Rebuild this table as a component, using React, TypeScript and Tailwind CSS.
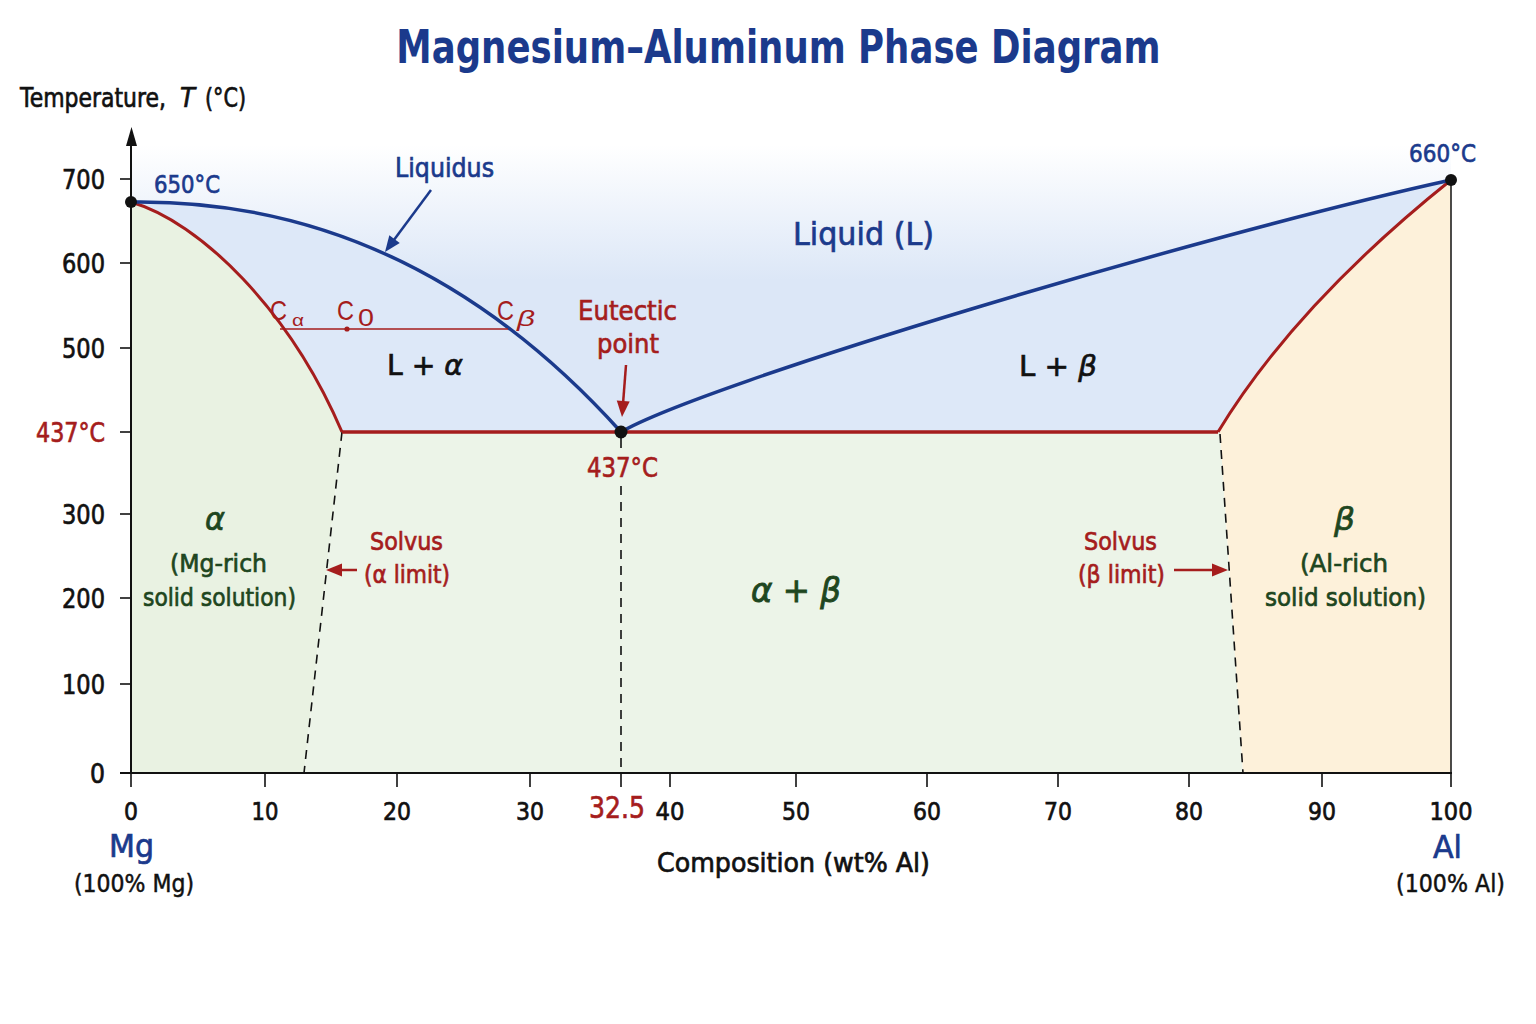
import type { ReactNode } from 'react';

const BLUE = '#1b3a8c';
const RED = '#a51d1d';
const GREEN = '#1e4620';
const INK = '#111111';
const FONT = '"DejaVu Sans", "Noto Sans", sans-serif';
const THIN = '"Liberation Sans", "DejaVu Sans", sans-serif';

// text squeezed to the measured width of the reference label
const Label = ({
    x, y, w, size, fill = INK, anchor = 'middle', italic = false, family = FONT, heavy = 0.7, children,
}: {
    x: number; y: number; w?: number; size: number; fill?: string;
    anchor?: 'start' | 'middle' | 'end'; italic?: boolean; family?: string; heavy?: number; children: ReactNode;
}) => (
    <text
        x={x}
        y={y}
        fontSize={size}
        fill={fill}
        stroke={heavy ? fill : undefined}
        strokeWidth={heavy || undefined}
        textAnchor={anchor}
        fontFamily={family}
        fontStyle={italic ? 'italic' : 'normal'}
        textLength={w}
        lengthAdjust={w ? 'spacingAndGlyphs' : undefined}
    >
        {children}
    </text>
);

const Arrow = ({ x1, y1, x2, y2, color }: { x1: number; y1: number; x2: number; y2: number; color: string }) => {
    const len = Math.hypot(x2 - x1, y2 - y1);
    const ux = (x2 - x1) / len;
    const uy = (y2 - y1) / len;
    const head = 16;
    const half = 6.5;
    const bx = x2 - ux * head;
    const by = y2 - uy * head;
    const pts = `${x2},${y2} ${bx - uy * half},${by + ux * half} ${bx + uy * half},${by - ux * half}`;
    return (
        <g>
            <line x1={x1} y1={y1} x2={bx + ux * 2} y2={by + uy * 2} stroke={color} strokeWidth={2.5} />
            <polygon points={pts} fill={color} />
        </g>
    );
};

const yTicks = [
    { v: '700', y: 179, w: 43 },
    { v: '600', y: 263, w: 43 },
    { v: '500', y: 348, w: 43 },
    { v: '300', y: 514, w: 43 },
    { v: '200', y: 598, w: 43 },
    { v: '100', y: 684, w: 43 },
    { v: '0', y: 773, w: 15 },
];

const xTicks = [
    { v: '0', x: 131, w: 14 },
    { v: '10', x: 265, w: 27 },
    { v: '20', x: 397, w: 28 },
    { v: '30', x: 530, w: 28 },
    { v: '40', x: 670, w: 29 },
    { v: '50', x: 796, w: 28 },
    { v: '60', x: 927, w: 28 },
    { v: '70', x: 1058, w: 28 },
    { v: '80', x: 1189, w: 28 },
    { v: '90', x: 1322, w: 28 },
    { v: '100', x: 1451, w: 43 },
];

const LIQ_LEFT = 'M131,202 Q410,198 621,432';
const LIQ_RIGHT = 'M621,432 C700,385 1200,235 1451,180';
const SOL_LEFT = 'M131,202 C200,222 290,310 342,432';
const SOL_RIGHT = 'M1218,432 Q1295,305 1451,180';

const PhaseDiagram = () => (
    <svg width={1536} height={954} viewBox="0 70 1536 954" className="block">
        <defs>
            <linearGradient id="liquid" gradientUnits="userSpaceOnUse" x1="0" y1="145" x2="0" y2="280">
                <stop offset="0" stopColor="#dce7f7" stopOpacity="0" />
                <stop offset="1" stopColor="#dce7f7" />
            </linearGradient>
        </defs>

        {/* phase fields */}
        <path d="M131,140 L1451,140 L1451,180 C1200,235 700,385 621,432 Q410,198 131,202 Z" fill="url(#liquid)" />
        <path d="M131,202 Q410,198 621,432 L342,432 C290,310 200,222 131,202 Z" fill="#dde8f8" />
        <path d="M621,432 C700,385 1200,235 1451,180 Q1295,305 1218,432 Z" fill="#dde8f8" />
        <path d="M131,202 C200,222 290,310 342,432 L304,773 L131,773 Z" fill="#e9f2e2" />
        <path d="M342,432 L1220,432 L1243,773 L304,773 Z" fill="#ecf4e8" />
        <path d="M1218,432 Q1295,305 1451,180 L1451,773 L1243,773 L1220,432 Z" fill="#fdf1da" />

        {/* boundaries */}
        <line x1={342} y1={432} x2={304} y2={773} stroke={INK} strokeWidth={1.6} strokeDasharray="9 7" />
        <line x1={1220} y1={434} x2={1243} y2={773} stroke={INK} strokeWidth={1.6} strokeDasharray="9 7" />
        <line x1={621} y1={438} x2={621} y2={448} stroke={INK} strokeWidth={1.6} />
        <line x1={621} y1={486} x2={621} y2={773} stroke={INK} strokeWidth={1.6} strokeDasharray="9 7" />
        <path d={SOL_LEFT} fill="none" stroke={RED} strokeWidth={3} />
        <path d={SOL_RIGHT} fill="none" stroke={RED} strokeWidth={3} />
        <line x1={342} y1={432} x2={1218} y2={432} stroke={RED} strokeWidth={3.5} />
        <path d={LIQ_LEFT} fill="none" stroke={BLUE} strokeWidth={3.5} />
        <path d={LIQ_RIGHT} fill="none" stroke={BLUE} strokeWidth={3.5} />

        {/* tie line */}
        <line x1={280} y1={329} x2={508} y2={329} stroke={RED} strokeWidth={1.3} />
        <circle cx={347} cy={329} r={2.6} fill={RED} />

        {/* axes */}
        <line x1={1451} y1={180} x2={1451} y2={773} stroke={INK} strokeWidth={1.5} />
        <line x1={131} y1={773} x2={131} y2={144} stroke={INK} strokeWidth={2} />
        <polygon points="131.5,127 126,146 137,146" fill={INK} />
        <line x1={120} y1={773} x2={1452} y2={773} stroke={INK} strokeWidth={2} />
        {yTicks.map((t) => (
            <g key={t.v}>
                <line x1={120} y1={t.y} x2={131} y2={t.y} stroke={INK} strokeWidth={1.6} />
                <Label x={105} y={t.y + 10} w={t.w} size={26} anchor="end">{t.v}</Label>
            </g>
        ))}
        <line x1={120} y1={432} x2={131} y2={432} stroke={INK} strokeWidth={1.6} />
        <Label x={105} y={442} w={69} size={26} anchor="end" fill={RED}>437°C</Label>

        {xTicks.map((t) => (
            <g key={t.v}>
                <line x1={t.x} y1={773} x2={t.x} y2={787} stroke={INK} strokeWidth={1.6} />
                <Label x={t.x} y={820} w={t.w} size={25}>{t.v}</Label>
            </g>
        ))}
        <line x1={621} y1={773} x2={621} y2={787} stroke={INK} strokeWidth={1.6} />
        <Label x={617} y={818} w={56} size={30} fill={RED}>32.5</Label>

        {/* key points */}
        <circle cx={131} cy={202} r={6} fill={INK} />
        <circle cx={1451} cy={180} r={6} fill={INK} />
        <circle cx={621} cy={432} r={6.5} fill={INK} />

        {/* axis titles */}
        <Label x={20} y={107} w={146} size={26} anchor="start">Temperature,</Label>
        <Label x={180} y={107} w={15} size={26} anchor="start" italic>T</Label>
        <Label x={205} y={107} w={41} size={26} anchor="start">(°C)</Label>
        <Label x={131.5} y={857} w={45} size={32} fill={BLUE}>Mg</Label>
        <Label x={134} y={892} w={120} size={24} heavy={0.5}>(100% Mg)</Label>
        <Label x={793.5} y={872} w={273} size={26}>Composition (wt% Al)</Label>
        <Label x={1447.5} y={858} w={29} size={32} fill={BLUE}>Al</Label>
        <Label x={1450.5} y={892} w={109} size={24} heavy={0.5}>(100% Al)</Label>

        {/* temperatures */}
        <Label x={154} y={193} w={66} size={25} anchor="start" fill={BLUE}>650°C</Label>
        <Label x={1409} y={162} w={67} size={25} anchor="start" fill={BLUE}>660°C</Label>
        <Label x={622.5} y={477} w={71} size={27} fill={RED}>437°C</Label>

        {/* liquid side */}
        <Label x={444.5} y={177} w={99} size={26} fill={BLUE}>Liquidus</Label>
        <Arrow x1={431} y1={190} x2={385} y2={252} color={BLUE} />
        <Label x={863.5} y={245} w={141} size={32} fill={BLUE}>Liquid (L)</Label>
        <Label x={425} y={375} w={76} size={28}>
            L + <tspan fontStyle="italic">α</tspan>
        </Label>
        <Label x={1058} y={376} w={78} size={28}>
            L + <tspan fontStyle="italic">β</tspan>
        </Label>
        <Label x={627.5} y={320} w={99} size={27} fill={RED}>Eutectic</Label>
        <Label x={628} y={353} w={62} size={27} fill={RED}>point</Label>
        <Arrow x1={626} y1={365} x2={622} y2={417} color={RED} />

        {/* lever rule compositions */}
        <Label x={270} y={320} w={17} size={28} anchor="start" fill={RED} family={THIN} heavy={0}>C</Label>
        <Label x={292} y={326} w={12} size={17} anchor="start" fill={RED} family={THIN} heavy={0}>α</Label>
        <Label x={337} y={320} w={17} size={28} anchor="start" fill={RED} family={THIN} heavy={0}>C</Label>
        <Label x={358} y={326} w={16} size={24} anchor="start" fill={RED} family={THIN} heavy={0}>0</Label>
        <Label x={497} y={320} w={17} size={28} anchor="start" fill={RED} family={THIN} heavy={0}>C</Label>
        <Label x={517} y={326} w={18} size={23} anchor="start" italic fill={RED} family={THIN} heavy={0}>β</Label>

        {/* solid side */}
        <Label x={215} y={530} w={20} size={32} italic fill={GREEN}>α</Label>
        <Label x={218.5} y={572} w={97} size={25} fill={GREEN}>(Mg-rich</Label>
        <Label x={219.5} y={606} w={153} size={25} fill={GREEN}>solid solution)</Label>
        <Label x={406.5} y={550} w={73} size={25} fill={RED}>Solvus</Label>
        <Label x={407} y={583} w={86} size={25} fill={RED}>(α limit)</Label>
        <Arrow x1={357} y1={570} x2={326} y2={570} color={RED} />

        <Label x={796} y={602} w={90} size={34} fill={GREEN} heavy={0.9}>
            <tspan fontStyle="italic">α</tspan> + <tspan fontStyle="italic">β</tspan>
        </Label>

        <Label x={1120.5} y={550} w={73} size={25} fill={RED}>Solvus</Label>
        <Label x={1121.5} y={583} w={87} size={25} fill={RED}>(β limit)</Label>
        <Arrow x1={1174} y1={570} x2={1228} y2={570} color={RED} />
        <Label x={1344.5} y={530} w={21} size={32} italic fill={GREEN}>β</Label>
        <Label x={1344} y={572} w={88} size={25} fill={GREEN}>(Al-rich</Label>
        <Label x={1345.5} y={606} w={161} size={25} fill={GREEN}>solid solution)</Label>
    </svg>
);

export default function App() {
    return (
        <div className="w-[1536px] h-[1024px] bg-white overflow-hidden flex flex-col">
            <div className="flex justify-center pl-[20px] pt-[23px] h-[70px]">
                <h1
                    className="text-[47px] leading-[47px] font-bold text-[#1b3a8c] whitespace-nowrap scale-x-[0.756]"
                    style={{ fontFamily: FONT }}
                >
                    Magnesium–Aluminum Phase Diagram
                </h1>
            </div>
            <PhaseDiagram />
        </div>
    );
}
